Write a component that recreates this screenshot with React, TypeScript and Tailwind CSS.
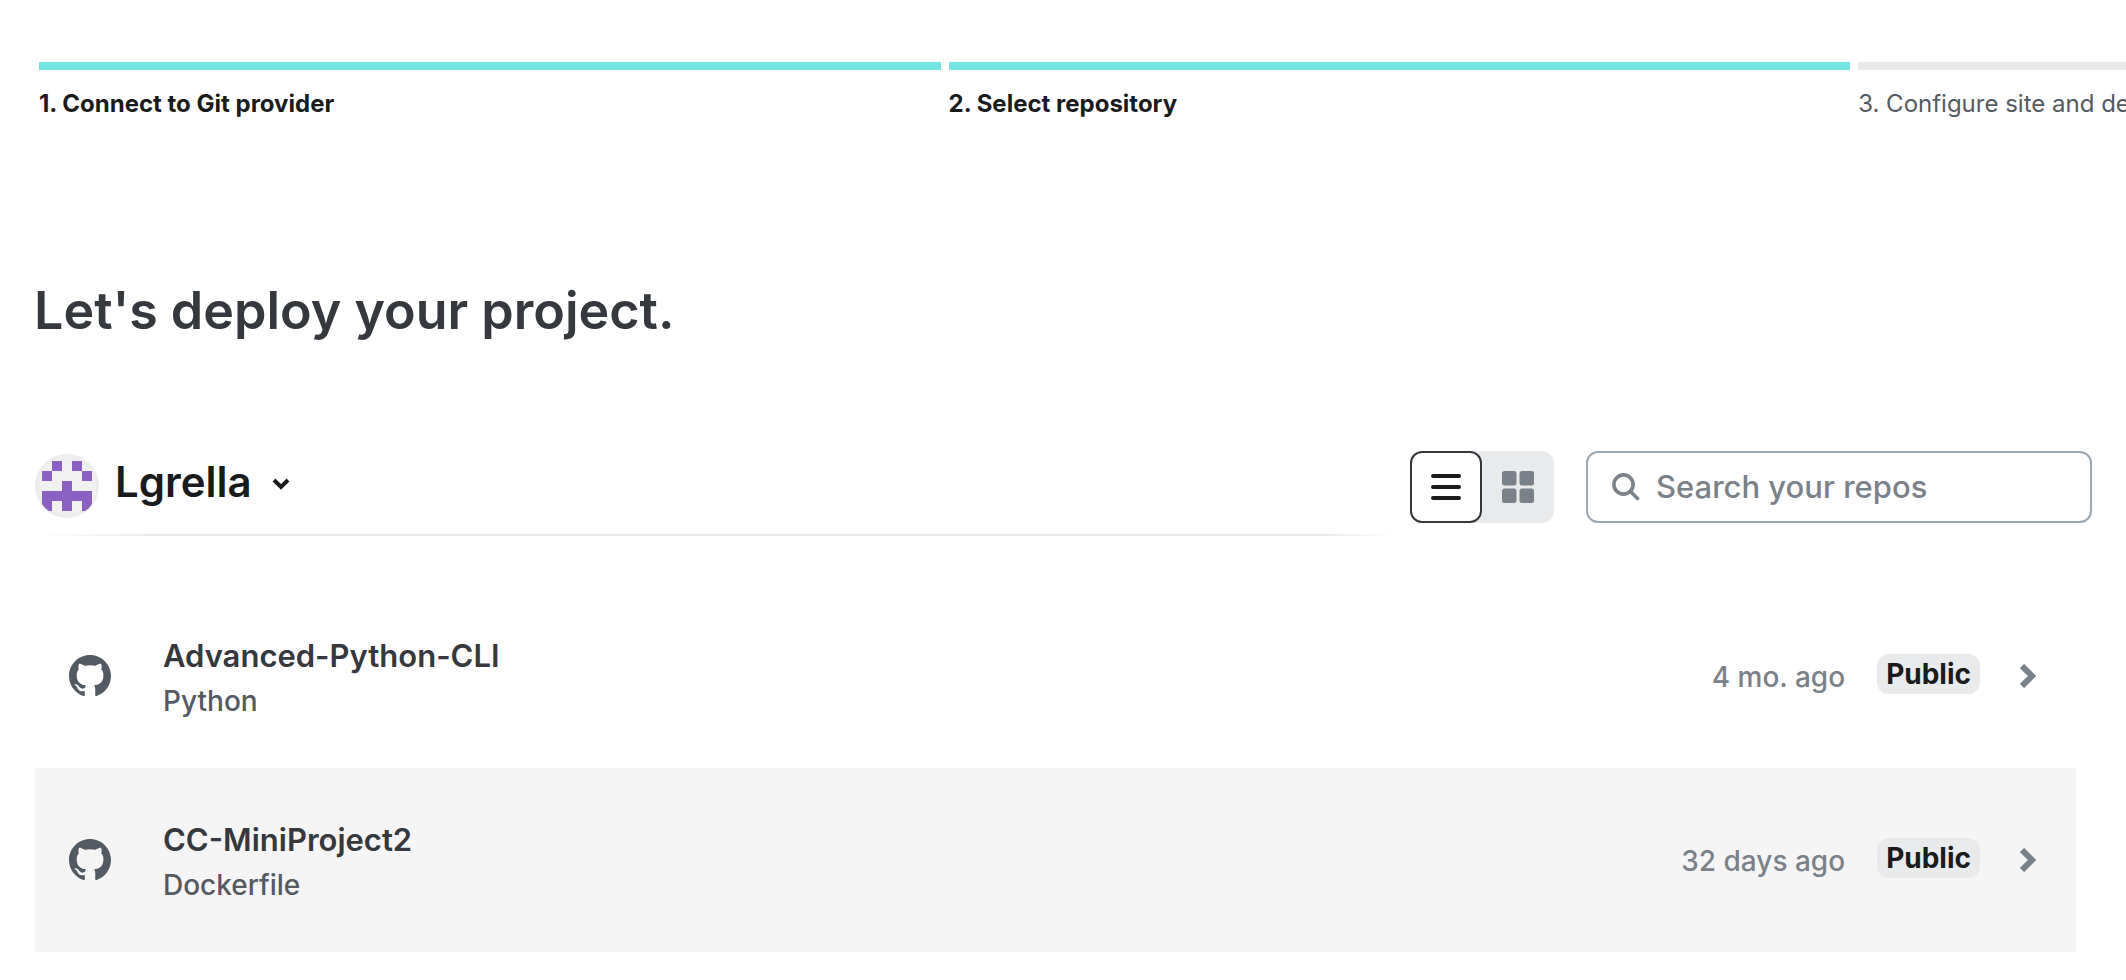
import { useState } from "react";

type Repo = { name: string; language: string; updated: string };

const repos: Repo[] = [
  { name: "Advanced-Python-CLI", language: "Python", updated: "4 mo. ago" },
  { name: "CC-MiniProject2", language: "Dockerfile", updated: "32 days ago" },
];

const steps = [
  { label: "1. Connect to Git provider", done: true },
  { label: "2. Select repository", done: true },
  { label: "3. Configure site and deploy", done: false },
];

function Avatar() {
  return (
    <svg viewBox="0 0 64 64" className="size-16 shrink-0" aria-hidden="true">
      <defs>
        <clipPath id="avatar-clip">
          <circle cx="32" cy="32" r="31" />
        </clipPath>
      </defs>
      <circle cx="32" cy="32" r="32" fill="#ededee" />
      <circle cx="32" cy="32" r="29" fill="#f0f0f0" />
      <path
        clipPath="url(#avatar-clip)"
        fill="#8c60c2"
        d="M17 7h10v10H17zM37 7h10v10H37zM7 17h10v10H7zM47 17h10v10H47zM27 27h10v10h20v20H47V47H37v10H27V47H17v10H7V37h20z"
      />
    </svg>
  );
}

function GitHubMark() {
  return (
    <svg viewBox="0 0 16 16" className="size-[42px] shrink-0 fill-[#545a61]" aria-hidden="true">
      <path d="M8 0C3.58 0 0 3.58 0 8c0 3.54 2.29 6.53 5.47 7.59.4.07.55-.17.55-.38 0-.19-.01-.82-.01-1.49-2.01.37-2.53-.49-2.69-.94-.09-.23-.48-.94-.82-1.13-.28-.15-.68-.52-.01-.53.63-.01 1.08.58 1.23.82.72 1.21 1.87.87 2.33.66.07-.52.28-.87.51-1.07-1.78-.2-3.64-.89-3.64-3.95 0-.87.31-1.59.82-2.15-.08-.2-.36-1.02.08-2.12 0 0 .67-.21 2.2.82.64-.18 1.32-.27 2-.27s1.36.09 2 .27c1.53-1.04 2.2-.82 2.2-.82.44 1.1.16 1.92.08 2.12.51.56.82 1.27.82 2.15 0 3.07-1.87 3.75-3.65 3.95.29.25.54.73.54 1.48 0 1.07-.01 1.93-.01 2.2 0 .21.15.46.55.38A8.01 8.01 0 0 0 16 8c0-4.42-3.58-8-8-8z" />
    </svg>
  );
}

export default function App() {
  const [view, setView] = useState<"list" | "grid">("list");
  const toggle = (active: boolean) =>
    active
      ? "flex h-[72px] w-18 items-center justify-center rounded-xl border-2 border-[#35393e] bg-white text-[#1a1b1d]"
      : "flex h-[72px] w-18 items-center justify-center rounded-xl text-[#7b8188]";

  return (
    <main className="overflow-hidden bg-white font-['Inter',sans-serif] text-[#35393e]">
      <ol className="flex gap-2 pt-[62px] pl-[39px]">
        {steps.map((step) => (
          <li
            key={step.label}
            className={
              step.done
                ? "shrink-0 basis-[43.2%] border-t-8 border-[#72e5e0] pt-4 text-2xl leading-9 font-bold text-[#1a1b1d]"
                : "shrink-0 basis-[43.2%] border-t-8 border-[#e9eaeb] pt-4 text-2xl leading-9 text-[#545a61]"
            }
          >
            {step.label}
          </li>
        ))}
      </ol>

      <h1 className="mt-[149px] px-[34px] text-[52px] leading-[80px] font-semibold">
        Let's deploy your project.
      </h1>

      <div className="mt-[100px] flex items-start pr-[34px] pl-[35px]">
        <div className="mr-4 min-w-0 flex-1">
          <button type="button" className="flex items-center gap-4 pt-[3px] text-[42px] leading-14 font-semibold text-[#1a1b1d]">
            <Avatar />
            <span className="flex items-center gap-5 pb-2">
              Lgrella
              <svg viewBox="0 0 18 12" className="mt-1 h-3 w-[18px]" fill="none" stroke="currentColor" strokeWidth="4" aria-hidden="true">
                <path d="M2 2l7 7 7-7" />
              </svg>
            </span>
          </button>
          <div className="mt-4 h-[2px] bg-linear-[to_right,#ffffff,#e9eaeb_9%,#e9eaeb_95%,#ffffff]" />
        </div>

        <div className="mr-8 flex shrink-0 rounded-xl bg-[#e9eaeb]">
          <button type="button" aria-label="List view" aria-pressed={view === "list"} onClick={() => setView("list")} className={toggle(view === "list")}>
            <svg viewBox="0 0 32 32" className="size-8" fill="none" stroke="currentColor" strokeWidth="4" strokeLinecap="round" aria-hidden="true">
              <path d="M3 5h26M3 16h26M3 27h26" />
            </svg>
          </button>
          <button type="button" aria-label="Grid view" aria-pressed={view === "grid"} onClick={() => setView("grid")} className={toggle(view === "grid")}>
            <svg viewBox="0 0 32 32" className="size-8 fill-current" aria-hidden="true">
              <rect width="14.5" height="14.5" rx="2.5" />
              <rect x="17.5" width="14.5" height="14.5" rx="2.5" />
              <rect y="17.5" width="14.5" height="14.5" rx="2.5" />
              <rect x="17.5" y="17.5" width="14.5" height="14.5" rx="2.5" />
            </svg>
          </button>
        </div>

        <label className="flex h-[72px] w-[506px] shrink-0 items-center gap-4 rounded-xl border-2 border-[#9ca7b1] px-6 text-[#7b8188]">
          <svg viewBox="0 0 28 28" className="size-7 shrink-0" fill="none" stroke="currentColor" strokeWidth="3.6" strokeLinecap="round" aria-hidden="true">
            <circle cx="11.5" cy="11.5" r="9.6" />
            <path d="M18.5 18.5l7 7" />
          </svg>
          <input type="search" aria-label="Search your repos" placeholder="Search your repos" className="w-full min-w-0 bg-transparent text-[31px] font-medium text-[#35393e] outline-none placeholder:text-[#7b8188]" />
        </label>
      </div>

      <ul className="mt-[48px] mb-7 pr-[50px] pl-[35px]">
        {repos.map((repo) => (
          <li key={repo.name} className="even:bg-[#f5f5f6]">
            <a href="#configure" className="flex h-46 items-center pr-10 pl-[34px]">
              <GitHubMark />
              <span className="ml-[52px] flex flex-1 flex-col pt-[2px]">
                <span className="text-[31px] leading-12 font-semibold">{repo.name}</span>
                <span className="text-[28px] leading-[42px] font-medium text-[#545a61]">{repo.language}</span>
              </span>
              <span className="mt-[2px] mr-8 text-[28px] font-medium text-[#7b8188]">{repo.updated}</span>
              <span className="mr-10 mb-1 rounded-xl bg-[#e9eaeb] px-[9px] text-[28px] leading-10 font-bold text-[#1a1b1d]">
                Public
              </span>
              <svg viewBox="0 0 16 24" className="h-6 w-4" fill="none" stroke="#7b8188" strokeWidth="6" aria-hidden="true">
                <path d="M2 2l10 10-10 10" />
              </svg>
            </a>
          </li>
        ))}
      </ul>
    </main>
  );
}
